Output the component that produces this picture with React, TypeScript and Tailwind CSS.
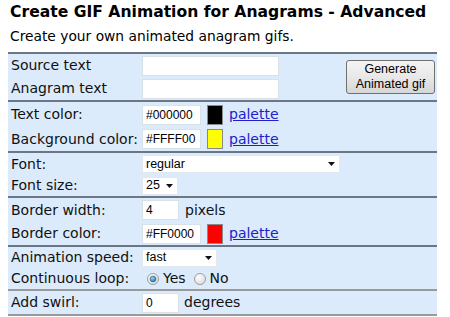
import React from "react";

const lab = "pl-[3px] w-[134px] shrink-0 text-[14px] text-[#111] whitespace-nowrap";
const inputCls =
  "h-[20px] bg-white border border-[#d8e0e8] px-[3px] text-[12px] text-black outline-none font-['Liberation_Sans',Arial,sans-serif]";

function Row({ h, label, children }: { h: string; label: string; children?: React.ReactNode }) {
  return (
    <div className={`flex items-center ${h}`}>
      <div className={lab}>{label}</div>
      <div className="flex items-center">{children}</div>
    </div>
  );
}

function Arrow() {
  return (
    <svg width="7" height="4" viewBox="0 0 7 4" className="shrink-0">
      <path d="M0 0 L7 0 L3.5 4 Z" fill="#111" />
    </svg>
  );
}

function Select({ w, value }: { w: string; value: string }) {
  return (
    <div
      className={`${w} h-[18px] bg-white border border-[#e3e8ee] flex items-center justify-between pl-[3px] pr-[4px] text-[12.5px] text-black font-['Liberation_Sans',Arial,sans-serif]`}
    >
      <span>{value}</span>
      <Arrow />
    </div>
  );
}

function ColorInput({ value, color }: { value: string; color: string }) {
  return (
    <>
      <input readOnly defaultValue={value} className={`${inputCls} w-[59px]`} />
      <div className="ml-[6px] w-[16px] h-[20px] border border-[#8a8a8a]" style={{ background: color }} />
      <a href="#" className="ml-[6px] text-[14px] text-[#2020cc] underline">
        palette
      </a>
    </>
  );
}

function Radio({ checked }: { checked?: boolean }) {
  return (
    <svg width="12" height="12" viewBox="0 0 13 13" className="shrink-0">
      <defs>
        <radialGradient id={checked ? "rg1" : "rg2"} cx="0.4" cy="0.35" r="0.7">
          <stop offset="0" stopColor="#ffffff" />
          <stop offset="1" stopColor="#d8d8d8" />
        </radialGradient>
        <radialGradient id="dot" cx="0.4" cy="0.35" r="0.7">
          <stop offset="0" stopColor="#9fd0f0" />
          <stop offset="1" stopColor="#1f6ea8" />
        </radialGradient>
      </defs>
      <circle cx="6.5" cy="6.5" r="6" fill={`url(#${checked ? "rg1" : "rg2"})`} stroke="#9a9b9b" strokeWidth="1" />
      {checked && <circle cx="6.5" cy="6.5" r="3.2" fill="url(#dot)" stroke="#2a5f8a" strokeWidth="0.6" />}
    </svg>
  );
}

export default function App() {
  return (
    <div className="w-[450px] h-[317px] bg-white overflow-hidden font-['DejaVu_Sans',Verdana,sans-serif] text-[#111]">
      <div className="pl-[10px] mt-[3px] leading-[18px] text-[15.6px] font-bold text-black whitespace-nowrap">
        Create GIF Animation for Anagrams - Advanced
      </div>
      <div className="pl-[10px] mt-[6px] leading-[18px] text-[13.8px] text-black whitespace-nowrap">
        Create your own animated anagram gifs.
      </div>
      <div className="mt-[7px] ml-[8px] w-[429px] bg-[#dcebfb]">
        <div className="border-t-2 border-[#6b7785] flex">
          <div className="flex-1">
            <Row h="h-[23px]" label="Source text">
              <input readOnly className={`${inputCls} w-[137px]`} />
            </Row>
            <Row h="h-[23px]" label="Anagram text">
              <input readOnly className={`${inputCls} w-[137px]`} />
            </Row>
          </div>
          <div className="flex items-center pr-[2px]">
            <button className="w-[89px] h-[34px] rounded-[3px] border border-[#707070] bg-gradient-to-b from-[#f4f4f4] via-[#e8e8e8] to-[#d6d6d6] text-[12.5px] leading-[15px] text-black font-['Liberation_Sans',Arial,sans-serif]">
              Generate
              <br />
              Animated gif
            </button>
          </div>
        </div>
        <div className="border-t-2 border-[#6b7785]">
          <Row h="h-[25px]" label="Text color:">
            <ColorInput value="#000000" color="#000000" />
          </Row>
          <Row h="h-[24px]" label="Background color:">
            <ColorInput value="#FFFF00" color="#ffff00" />
          </Row>
        </div>
        <div className="border-t-2 border-[#6b7785]">
          <Row h="h-[22px]" label="Font:">
            <Select w="w-[198px]" value="regular" />
          </Row>
          <Row h="h-[21px]" label="Font size:">
            <Select w="w-[36px]" value="25" />
          </Row>
        </div>
        <div className="border-t-2 border-[#6b7785]">
          <Row h="h-[24px]" label="Border width:">
            <input readOnly defaultValue="4" className={`${inputCls} w-[37px]`} />
            <span className="ml-[6px] text-[14px]">pixels</span>
          </Row>
          <Row h="h-[23px]" label="Border color:">
            <ColorInput value="#FF0000" color="#ff0000" />
          </Row>
        </div>
        <div className="border-t-2 border-[#6b7785]">
          <Row h="h-[21px]" label="Animation speed:">
            <Select w="w-[75px]" value="fast" />
          </Row>
          <Row h="h-[21px]" label="Continuous loop:">
            <div className="ml-[5px] flex items-center">
              <Radio checked />
              <span className="ml-[4px] text-[14px]">Yes</span>
              <div className="ml-[8px]">
                <Radio />
              </div>
              <span className="ml-[4px] text-[14px]">No</span>
            </div>
          </Row>
        </div>
        <div className="border-t-2 border-b-2 border-[#9a9a9a]">
          <Row h="h-[23px]" label="Add swirl:">
            <input readOnly defaultValue="0" className={`${inputCls} w-[37px]`} />
            <span className="ml-[5px] text-[14px]">degrees</span>
          </Row>
        </div>
      </div>
    </div>
  );
}
